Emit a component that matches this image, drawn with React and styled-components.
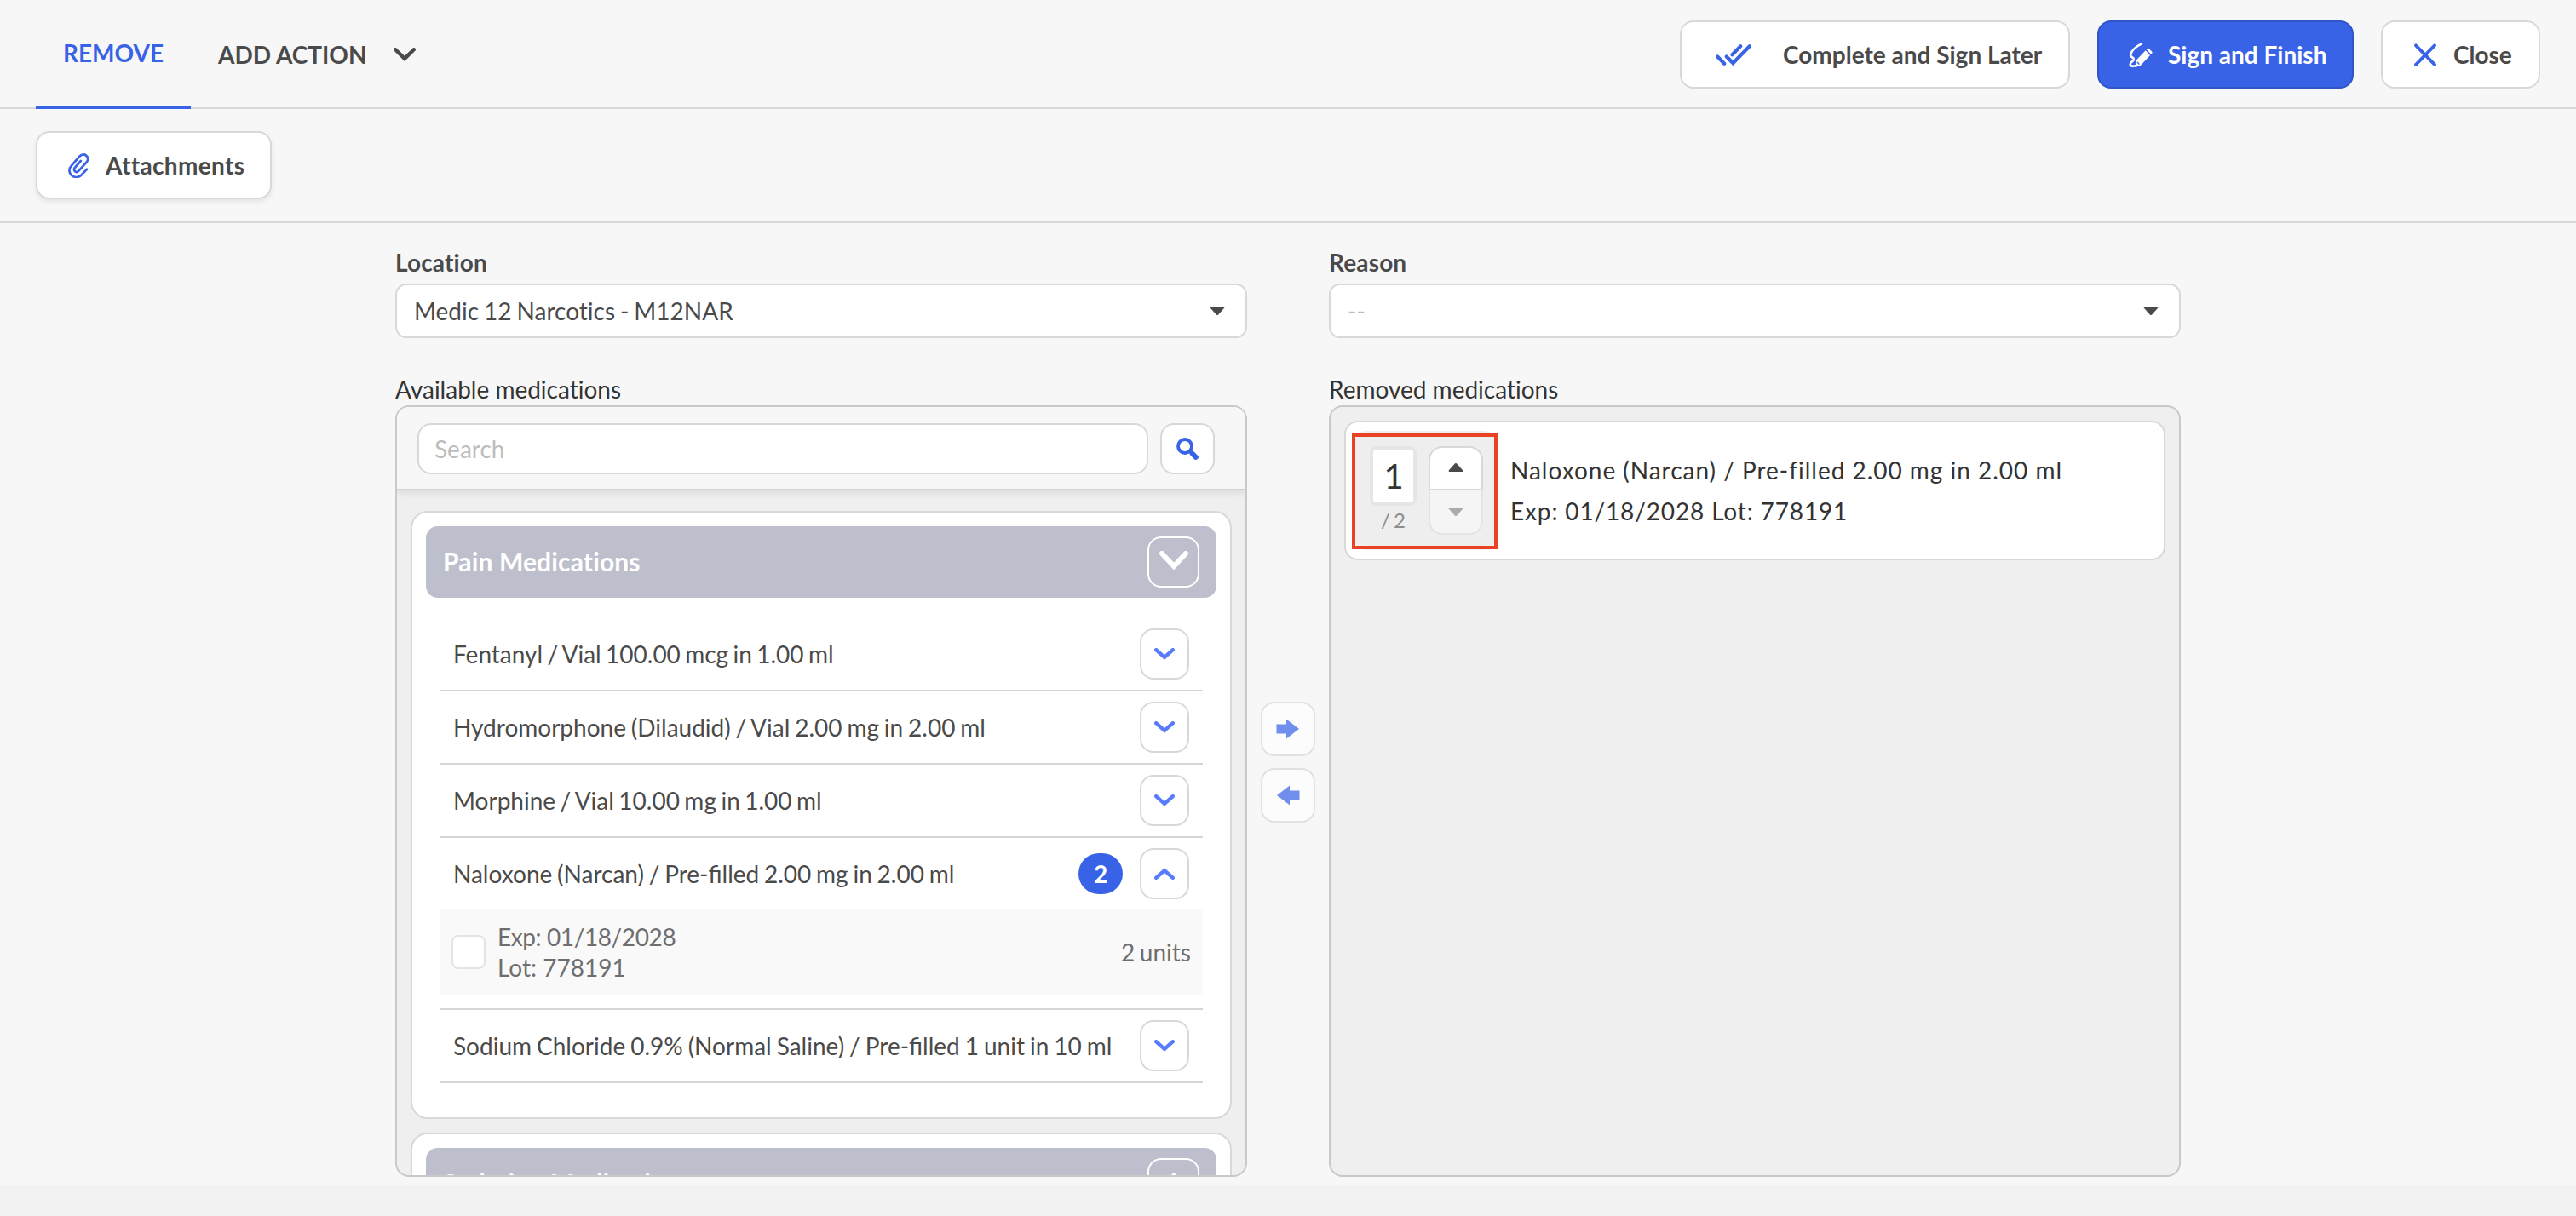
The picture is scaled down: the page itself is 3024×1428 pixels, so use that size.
import styled, { createGlobalStyle, css } from "styled-components";

const groups = [
  {
    name: "Pain Medications",
    open: true,
    items: [
      { name: "Fentanyl / Vial 100.00 mcg in 1.00 ml", spacing: -1.8 },
      { name: "Hydromorphone (Dilaudid) / Vial 2.00 mg in 2.00 ml", spacing: -1.3 },
      { name: "Morphine / Vial 10.00 mg in 1.00 ml", spacing: -1.7 },
      {
        name: "Naloxone (Narcan) / Pre-filled 2.00 mg in 2.00 ml",
        spacing: -1.4,
        selected: 2,
        lots: [{ exp: "01/18/2028", lot: "778191", units: 2 }],
      },
      {
        name: "Sodium Chloride 0.9% (Normal Saline) / Pre-filled 1 unit in 10 ml",
        spacing: -1.2,
      },
    ],
  },
  { name: "Sedation Medications", open: false, items: [] },
];

function Chevron({ up, width = 24, height = 14, stroke = 4.4 }) {
  const h = stroke / 2;
  const d = up
    ? `M${h} ${height - h}L${width / 2} ${h + 1}L${width - h} ${height - h}`
    : `M${h} ${h}L${width / 2} ${height - h - 1}L${width - h} ${h}`;
  return (
    <svg width={width} height={height} viewBox={`0 0 ${width} ${height}`} fill="none">
      <path d={d} stroke="currentColor" strokeWidth={stroke} strokeLinecap="round" />
    </svg>
  );
}

function Caret({ up }) {
  return (
    <svg width="18" height="10" viewBox="0 0 18 10" fill="currentColor">
      <path
        d={
          up
            ? "M1.6 10h14.8c.9 0 1.3-1 .7-1.7L10.2 .6a1.6 1.6 0 0 0-2.4 0L.9 8.3C.3 9 .7 10 1.6 10z"
            : "M1.6 0h14.8c.9 0 1.3 1 .7 1.7L10.2 9.4a1.6 1.6 0 0 1-2.4 0L.9 1.7C.3 1 .7 0 1.6 0z"
        }
      />
    </svg>
  );
}

function ArrowIcon({ left }) {
  return (
    <svg width="28" height="24" viewBox="0 0 28 24" fill="currentColor">
      <path d={left ? "M27.5 6.5v11H16V23.5L1 12 16 .5v6z" : "M.5 6.5v11H12V23.5L27 12 12 .5v6z"} />
    </svg>
  );
}

function SearchIcon() {
  return (
    <svg width="26" height="26" viewBox="0 0 26 26" fill="none" stroke="currentColor">
      <circle cx="10" cy="10" r="8" strokeWidth="3.8" />
      <path d="M15.5 15.5l2 2" strokeWidth="4" />
      <path d="M18.5 18.5l4.3 4.3" strokeWidth="6" strokeLinecap="round" />
    </svg>
  );
}

function ClipIcon() {
  return (
    <svg width="25" height="29" viewBox="0 0 25 29" fill="none" stroke="currentColor" strokeWidth="2.7" strokeLinecap="round" strokeLinejoin="round">
      <path d="M22 18.8l-6.3 6.6c-3.3 3.5-8.6 3.2-11.6.5-3.4-3-3.5-7.9-.5-11.1L13.5 3.5c2.2-2.4 5.4-2.7 7.6-.9 2.5 2 2.8 5.2.8 7.5l-9.7 10.7c-1.2 1.3-3 1.4-4.2.4-1.3-1.1-1.4-2.9-.2-4.3l7-7.9" />
    </svg>
  );
}

function DoubleCheckIcon() {
  return (
    <svg width="42" height="25" viewBox="0 0 42 25" fill="none" stroke="currentColor" strokeWidth="4.2" strokeLinecap="round">
      <path d="M2.2 14.5l8 8.2M12.8 14.5l7.6 7.7L39.8 2.3M19.5 12.2l9.7-9.9" />
    </svg>
  );
}

function SignIcon() {
  return (
    <svg width="28" height="31" viewBox="0 0 28 31" fill="none">
      <path
        d="M15 2.3C10 4.8 3.7 9.8 2.3 14.6c-1.3 4.4 4 2.8 3.6 6.2-.3 2.3-4.3 3-4.2 5.8.1 2.4 3.6 2.4 7 1.7"
        stroke="currentColor"
        strokeWidth="2.6"
        strokeLinecap="round"
      />
      <path
        d="M7.5 30l1.2-8.2L19.7 10.3l5.3 5.6L14 27.8zM20.8 9.2l1-1c.6-.6 1.5-.6 2.1 0l3.3 3.5c.6.6.6 1.5 0 2.1l-1 1z"
        fill="currentColor"
      />
      <path d="M10.3 24.3l1.6 1.7" stroke="#3863e6" strokeWidth="1.5" strokeLinecap="round" />
    </svg>
  );
}

function CloseIcon() {
  return (
    <svg width="26" height="27" viewBox="0 0 26 27" fill="none" stroke="currentColor" strokeWidth="3.8" strokeLinecap="round">
      <path d="M2 2.3l22 22.6M24 2.3L2 24.9" />
    </svg>
  );
}

function MedicationItem({ item }) {
  return (
    <Item>
      <ItemRow>
        <ItemName $spacing={item.spacing}>{item.name}</ItemName>
        {item.selected && <Badge>{item.selected}</Badge>}
        <ToggleButton>
          <Chevron up={!!item.lots} />
        </ToggleButton>
      </ItemRow>
      {item.lots?.map((lot) => (
        <LotRow key={lot.lot}>
          <Checkbox />
          <LotInfo>
            <LotDate>Exp: {lot.exp}</LotDate>
            <div>Lot: {lot.lot}</div>
          </LotInfo>
          <LotUnits>{lot.units} units</LotUnits>
        </LotRow>
      ))}
    </Item>
  );
}

export default function App() {
  return (
    <>
      <GlobalStyle />
      <Page>
        <Header>
          <Tabs>
            <Tab $active>REMOVE</Tab>
            <AddAction>
              ADD ACTION
              <Chevron width={26} height={16} stroke={4.4} />
            </AddAction>
          </Tabs>
          <Actions>
            <Button $width={458} $pad={40} $gap={37}>
              <DoubleCheckIcon />
              Complete and Sign Later
            </Button>
            <Button $width={301} $pad={35} $gap={18} $primary>
              <SignIcon />
              Sign and Finish
            </Button>
            <Button $width={187} $pad={37} $gap={20}>
              <CloseIcon />
              Close
            </Button>
          </Actions>
        </Header>
        <SubHeader>
          <Button $width={277} $pad={36} $gap={19} $tracking={0.35} $raised>
            <ClipIcon />
            Attachments
          </Button>
        </SubHeader>
        <Content>
          <Column>
            <Label>Location</Label>
            <Select>
              Medic 12 Narcotics - M12NAR
              <Caret />
            </Select>
            <ListLabel>Available medications</ListLabel>
            <Panel>
              <SearchBar>
                <SearchInput placeholder="Search" />
                <SearchButton>
                  <SearchIcon />
                </SearchButton>
              </SearchBar>
              <Groups>
                {groups.map((group) => (
                  <Group key={group.name}>
                    <GroupHeader>
                      {group.name}
                      <GroupToggle>
                        <Chevron up={!group.open} width={34} height={22} stroke={6} />
                      </GroupToggle>
                    </GroupHeader>
                    {group.open && (
                      <Items>
                        {group.items.map((item) => (
                          <MedicationItem key={item.name} item={item} />
                        ))}
                      </Items>
                    )}
                  </Group>
                ))}
              </Groups>
            </Panel>
          </Column>
          <Transfer>
            <TransferButton>
              <ArrowIcon />
            </TransferButton>
            <TransferButton>
              <ArrowIcon left />
            </TransferButton>
          </Transfer>
          <Column>
            <Label>Reason</Label>
            <Select $empty>
              --
              <Caret />
            </Select>
            <ListLabel>Removed medications</ListLabel>
            <Panel>
              <RemovedCard>
                <Quantity>
                  <Count>
                    <CountValue>1</CountValue>
                    <CountTotal>/ 2</CountTotal>
                  </Count>
                  <Stepper>
                    <StepButton>
                      <Caret up />
                    </StepButton>
                    <StepButton $disabled>
                      <Caret />
                    </StepButton>
                  </Stepper>
                  <Highlight />
                </Quantity>
                <RemovedInfo>
                  <div>Naloxone (Narcan) / Pre-filled 2.00 mg in 2.00 ml</div>
                  <RemovedLot>Exp: 01/18/2028 Lot: 778191</RemovedLot>
                </RemovedInfo>
              </RemovedCard>
            </Panel>
          </Column>
        </Content>
      </Page>
    </>
  );
}

const GlobalStyle = createGlobalStyle`
  * {
    box-sizing: border-box;
  }
  body {
    margin: 0;
    background: #f2f2f2;
    font-family: Lato, "Open Sans", sans-serif;
    font-size: 28px;
    line-height: 36px;
    font-variant-ligatures: none;
    color: #4a4a4a;
  }
  button, input {
    font: inherit;
    font-variant-ligatures: none;
    color: inherit;
  }
  svg {
    display: block;
    flex: none;
  }
`;
const Page = styled.div`
  width: 3024px;
  height: 1392px;
  background: #f7f7f7;
  display: flex;
  flex-direction: column;
`;
const Header = styled.header`
  height: 128px;
  flex: none;
  border-bottom: 2px solid #d8d8d8;
  padding: 0 42px;
  display: flex;
  justify-content: space-between;
`;
const Tabs = styled.div`
  display: flex;
  height: 128px;
  font-weight: 700;
`;
const Tab = styled.div`
  width: 182px;
  display: flex;
  justify-content: center;
  align-items: center;
  border-bottom: 4px solid ${(props) => (props.$active ? "#3863e6" : "transparent")};
  color: ${(props) => (props.$active ? "#3863e6" : "#4a4a4a")};
`;
const AddAction = styled.div`
  display: flex;
  align-items: center;
  gap: 31px;
  padding-left: 32px;
`;
const Actions = styled.div`
  display: flex;
  gap: 32px;
  padding-top: 24px;
`;
const Button = styled.button`
  width: ${(props) => props.$width}px;
  height: 80px;
  padding: 0 0 0 ${(props) => props.$pad}px;
  display: flex;
  align-items: center;
  gap: ${(props) => props.$gap}px;
  border: 2px solid #d8d8d8;
  border-radius: 16px;
  background: #ffffff;
  font-weight: 700;
  letter-spacing: ${(props) => props.$tracking || 0}px;
  white-space: nowrap;
  svg {
    color: #3863e6;
  }
  ${(props) =>
    props.$raised &&
    css`
      box-shadow: 0 3px 6px rgba(0, 0, 0, 0.08);
    `}
  ${(props) =>
    props.$primary &&
    css`
      background: #3863e6;
      border-color: #2f55c8;
      color: #ffffff;
      svg {
        color: #ffffff;
      }
    `}
`;
const SubHeader = styled.div`
  height: 134px;
  flex: none;
  border-bottom: 2px solid #d8d8d8;
  padding: 26px 42px;
`;
const Content = styled.main`
  flex: 1;
  min-height: 0;
  display: flex;
  justify-content: center;
  padding: 28px 0 10px;
`;
const Column = styled.section`
  width: 1000px;
  display: flex;
  flex-direction: column;
`;
const Label = styled.div`
  height: 43px;
  line-height: 37px;
  font-weight: 700;
  letter-spacing: 0.15px;
`;
const Select = styled.div`
  height: 64px;
  flex: none;
  border: 2px solid #d8d8d8;
  border-radius: 13px;
  background: #ffffff;
  padding: 0 24px 0 20px;
  display: flex;
  align-items: center;
  justify-content: space-between;
  word-spacing: -1.2px;
  color: ${(props) => (props.$empty ? "#bdbdbd" : "#4a4a4a")};
  svg {
    color: #4a4a4a;
  }
`;
const ListLabel = styled.div`
  margin-top: 42px;
  height: 37px;
  color: #333333;
`;
const Panel = styled.div`
  flex: 1;
  min-height: 0;
  border: 2px solid #c9c9c9;
  border-radius: 16px;
  background: #efefef;
  overflow: hidden;
`;
const SearchBar = styled.div`
  position: relative;
  height: 98px;
  padding: 19px 36px 17px 24px;
  border-bottom: 2px solid #d2d2d2;
  background: #f7f7f7;
  box-shadow: 0 4px 8px rgba(0, 0, 0, 0.08);
  display: flex;
  gap: 14px;
`;
const SearchInput = styled.input`
  flex: 1;
  height: 60px;
  border: 2px solid #d8d8d8;
  border-radius: 16px;
  background: #ffffff;
  padding: 0 18px 1px;
  &::placeholder {
    color: #bdbdbd;
    opacity: 1;
  }
`;
const SearchButton = styled.button`
  width: 64px;
  height: 60px;
  border: 2px solid #d8d8d8;
  border-radius: 16px;
  background: #ffffff;
  color: #3863e6;
  padding: 0;
  display: flex;
  align-items: center;
  justify-content: center;
`;
const Groups = styled.div`
  padding: 24px 16px 0;
  display: flex;
  flex-direction: column;
  gap: 16px;
`;
const Group = styled.div`
  border: 2px solid #d8d8d8;
  border-radius: 20px;
  background: #ffffff;
  padding: 16px 16px 40px;
`;
const GroupHeader = styled.div`
  height: 84px;
  border-radius: 14px;
  background: #bdbfcc;
  color: #ffffff;
  font-size: 30px;
  font-weight: 700;
  letter-spacing: 0.15px;
  padding: 0 20px 2px;
  display: flex;
  align-items: center;
  justify-content: space-between;
`;
const GroupToggle = styled.button`
  width: 61px;
  height: 60px;
  margin-top: 2px;
  border: 2px solid #ffffff;
  border-radius: 16px;
  background: none;
  padding: 0 0 4px;
  display: flex;
  align-items: center;
  justify-content: center;
`;
const Items = styled.div`
  padding: 24px 16px 0;
`;
const Item = styled.div`
  border-bottom: 2px solid #d5d5d5;
`;
const ItemRow = styled.div`
  height: 84px;
  padding: 0 16px;
  display: flex;
  align-items: center;
  gap: 20px;
`;
const ItemName = styled.div`
  flex: 1;
  white-space: nowrap;
  font-variant-ligatures: normal;
  word-spacing: ${(props) => props.$spacing}px;
`;
const Badge = styled.div`
  width: 52px;
  height: 48px;
  border-radius: 24px;
  background: #3863e6;
  color: #ffffff;
  font-weight: 700;
  display: flex;
  align-items: center;
  justify-content: center;
`;
const ToggleButton = styled.button`
  width: 58px;
  height: 60px;
  border: 2px solid #d8d8d8;
  border-radius: 16px;
  background: #ffffff;
  color: #587bfb;
  padding: 0;
  display: flex;
  align-items: center;
  justify-content: center;
`;
const LotRow = styled.div`
  height: 101px;
  margin-bottom: 15px;
  padding: 0 14px 2px;
  background: #f9f9f9;
  color: #6e6e6e;
  display: flex;
  align-items: center;
`;
const Checkbox = styled.div`
  width: 40px;
  height: 40px;
  border: 2px solid #e4e4e4;
  border-radius: 8px;
  background: #ffffff;
`;
const LotInfo = styled.div`
  flex: 1;
  padding-left: 14px;
`;
const LotDate = styled.div`
  letter-spacing: -0.4px;
`;
const LotUnits = styled.div`
  word-spacing: -1.5px;
`;
const Transfer = styled.div`
  width: 96px;
  padding-top: 534px;
  display: flex;
  flex-direction: column;
  align-items: center;
  gap: 14px;
`;
const TransferButton = styled(SearchButton)`
  height: 64px;
  opacity: 0.7;
`;
const RemovedCard = styled.div`
  height: 164px;
  margin: 16px;
  border: 2px solid #d8d8d8;
  border-radius: 16px;
  background: #ffffff;
  padding: 10px;
  display: flex;
`;
const Quantity = styled.div`
  position: relative;
  width: 166px;
  height: 140px;
  border-radius: 14px;
  background: #eeeeee;
  padding: 18px 15px 0 18px;
  display: flex;
  justify-content: space-between;
`;
/* callout frame drawn over the quantity control */
const Highlight = styled.div`
  position: absolute;
  top: 3px;
  left: -3px;
  width: 171px;
  height: 136px;
  border: 4px solid #e94225;
`;
const Count = styled.div`
  width: 55px;
  text-align: center;
`;
const CountValue = styled.div`
  height: 70px;
  border: 4px solid #e6e6e6;
  border-radius: 8px;
  background: #ffffff;
  color: #333333;
  font-size: 40px;
  line-height: 62px;
  padding-left: 1px;
`;
const CountTotal = styled.div`
  font-size: 24px;
  line-height: 33px;
  color: #8c8c8c;
  word-spacing: -2px;
`;
const Stepper = styled.div`
  width: 64px;
  height: 104px;
`;
const StepButton = styled.button`
  width: 64px;
  height: 52px;
  border: 2px solid #d8d8d8;
  border-radius: 16px 16px 0 0;
  background: #ffffff;
  color: #4a4a4a;
  padding: 0 0 2px;
  display: flex;
  align-items: center;
  justify-content: center;
  ${(props) =>
    props.$disabled &&
    css`
      border-color: #e4e4e4;
      border-top-color: #d8d8d8;
      border-radius: 0 0 16px 16px;
      margin-top: -2px;
      height: 54px;
      background: #f5f5f5;
      color: #acacac;
      padding: 0;
    `}
`;
const RemovedInfo = styled.div`
  padding: 22px 0 0 17px;
  color: #333333;
  line-height: 48px;
  letter-spacing: 0.98px;
  white-space: nowrap;
`;
const RemovedLot = styled.div`
  letter-spacing: 0.86px;
`;
